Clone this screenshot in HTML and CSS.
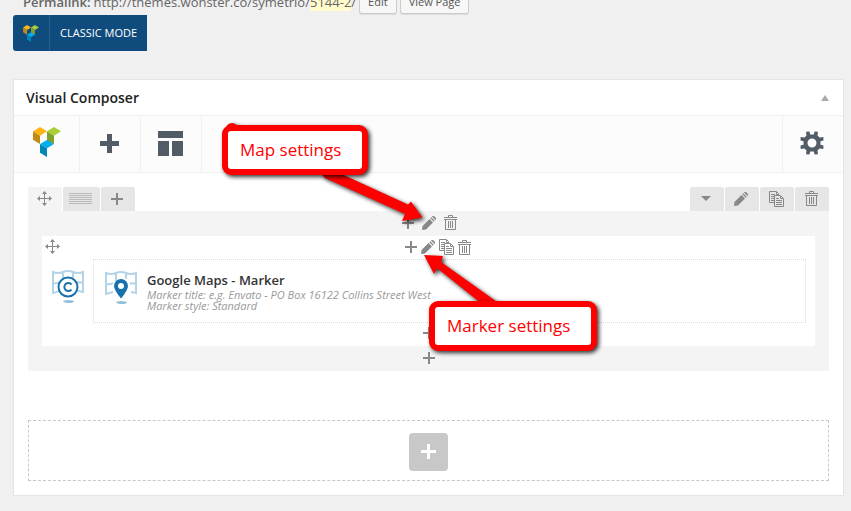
FILE: index.html
```html
<!DOCTYPE html>
<html lang="en">
<head>
<meta charset="utf-8">
<title>Visual Composer</title>
<link rel="stylesheet" href="styles.css">
</head>
<body>
<svg class="sprite" aria-hidden="true">
  <symbol id="logo" viewBox="0 0 84 90">
    <path fill="#fdb515" d="M0 13 21 0l21 13-21 13z"/><path fill="#c28a10" d="M0 13l21 13v25L0 38z"/>
    <path fill="#aacf38" d="M42 13 63 0l21 13-21 13z"/><path fill="#80a22c" d="M42 13l21 13v25L42 42z"/>
    <path fill="#00aeef" d="M21 51l21-12 21 12-21 13z"/><path fill="#0087b9" d="M21 51l21 13v26L21 77z"/>
  </symbol>
  <symbol id="plus" viewBox="0 0 12 12"><path d="M5 0h2v5h5v2H7v5H5V7H0V5h5z"/></symbol>
  <symbol id="plus-bold" viewBox="0 0 19 19"><path d="M7 0h5v7h7v5h-7v7H7v-7H0V7h7z"/></symbol>
  <symbol id="plus-add" viewBox="0 0 15 15"><path d="M6 0h3v6h6v3H9v6H6V9H0V6h6z"/></symbol>
  <symbol id="template" viewBox="0 0 25 25"><path d="M0 0h25v7H0zM0 10h11v15H0zM14 10h11v15H14z"/></symbol>
  <symbol id="move" viewBox="0 0 15 15"><path d="M7 2h1v5h5v1H8v5H7V8H2V7h5z"/><path d="M7.500 0 10 3H5zM7.500 15 5 12h5zM0 7.500 3 5v5zM15 7.500 12 10V5z"/></symbol>
  <symbol id="lines" viewBox="0 0 23 11"><path d="M0 0h23v1H0zM0 2h23v1H0zM0 4h23v1H0zM0 6h23v1H0zM0 8h23v1H0zM0 10h23v1H0z"/></symbol>
  <symbol id="caret" viewBox="0 0 10 5"><path d="M0 0h10L5 5z"/></symbol>
  <symbol id="pencil" viewBox="0 0 14 14"><path d="M0 14 .500 10 7.500 3l3.500 3.500-7 7zM8.300 2.200l1-1 3.500 3.500-1 1zM10 .500 10.500 0h1.500l2 2v1.500l-.500.500z"/></symbol>
  <symbol id="copy" viewBox="0 0 15 16"><path fill="none" stroke="currentColor" d="M5 11.500H.500V.500h7l2 2V5M7.500 1v2.500h2M2 3.500h4M2 5.500h3M2 7.500h3M2 9.500h3M5.500 4.500h6l3 3v8h-9zM11.500 5v2.500H14M7 7.500h3M7 9.500h6M7 11.500h6M7 13.500h6"/></symbol>
  <symbol id="trash" viewBox="0 0 13 15"><path fill="none" stroke="currentColor" d="M0 2.500h13M4.500 2V.500h4V2M0 4.500h13M1.500 5v9.500h10V5M4.500 6v7M6.500 6v7M8.500 6v7"/></symbol>
  <symbol id="gear" viewBox="-12 -12 24 24"><path fill-rule="evenodd" d="M-6-11.300-2.600-11.500-1.800-8.500H1.800L2.600-11.500 6-11.300 5.500-7.500 7.500-5.500 11.300-6 11.500-2.600 8.500-1.800V1.800L11.500 2.600 11.300 6 7.500 5.500 5.500 7.500 6 11.300 2.600 11.500 1.800 8.500H-1.800L-2.600 11.500-6 11.300-5.500 7.500-7.500 5.500-11.300 6-11.500 2.600-8.500 1.800V-1.800L-11.500-2.600-11.300-6-7.500-5.500-5.500-7.500zM0-4.500A4.500 4.500 0 1 0 0 4.500 4.500 4.500 0 1 0 0-4.500z"/></symbol>
  <symbol id="map" viewBox="0 0 32 33">
    <g fill="none" stroke="#b4d4e7" stroke-width="2"><path d="M8 21 1 23V2q5 2 10 0 5-2 10 0 5 2 10 0v20l-5-1M11 2v8M21 2v6M1 13q4 1 7-1M25 12q3 1 6 0"/></g>
    <path fill="#94c0da" d="M11 31q5-2 11 0 0 2-5 2t-6-2z"/>
  </symbol>
</svg>

<div class="permalink">
  <strong>Permalink:</strong>
  <span class="url">http://themes.wonster.co/symetrio/<mark>5144-2</mark>/</span>
  <button class="small" type="button">Edit</button>
  <button class="small" type="button">View Page</button>
</div>

<button class="classic" type="button">
  <span class="classic-icon"><svg width="16" height="17"><use href="#logo"/></svg></span>
  <span class="classic-label">CLASSIC MODE</span>
</button>

<main class="panel">
  <header class="panel-head">
    <h1>Visual Composer</h1>
    <button class="toggle" type="button" aria-label="Toggle panel"><svg width="8" height="6" viewBox="0 0 8 6"><path d="M4 0l4 6H0z"/></svg></button>
  </header>
  <nav class="toolbar">
    <a class="tool brand" href="#" aria-label="Visual Composer"><svg width="28" height="30"><use href="#logo"/></svg></a>
    <button class="tool" type="button" aria-label="Add element"><svg width="19" height="19"><use href="#plus-bold"/></svg></button>
    <button class="tool" type="button" aria-label="Templates"><svg width="25" height="25"><use href="#template"/></svg></button>
    <button class="tool settings" type="button" aria-label="Settings"><svg width="24" height="24"><use href="#gear"/></svg></button>
  </nav>

  <div class="content">
    <div class="tabs">
      <button class="tab move" type="button" aria-label="Move row"><svg width="15" height="15"><use href="#move"/></svg></button>
      <button class="tab layout" type="button" aria-label="Row layout"><svg width="23" height="11"><use href="#lines"/></svg></button>
      <button class="tab" type="button" aria-label="Add column"><svg width="12" height="12"><use href="#plus"/></svg></button>
      <span class="spacer"></span>
      <button class="tab" type="button" aria-label="Toggle row"><svg width="10" height="5"><use href="#caret"/></svg></button>
      <button class="tab" type="button" aria-label="Edit row"><svg width="14" height="14"><use href="#pencil"/></svg></button>
      <button class="tab" type="button" aria-label="Clone row"><svg width="15" height="16"><use href="#copy"/></svg></button>
      <button class="tab" type="button" aria-label="Delete row"><svg width="13" height="15"><use href="#trash"/></svg></button>
    </div>

    <section class="row">
      <div class="controls wide">
        <button type="button" aria-label="Add"><svg width="12" height="12"><use href="#plus"/></svg></button>
        <button type="button" aria-label="Edit map"><svg width="14" height="14"><use href="#pencil"/></svg></button>
        <button type="button" aria-label="Delete map"><svg width="13" height="15"><use href="#trash"/></svg></button>
      </div>
      <div class="column">
        <div class="column-head">
          <button class="drag" type="button" aria-label="Move map"><svg width="15" height="15"><use href="#move"/></svg></button>
          <div class="controls">
            <button type="button" aria-label="Add marker"><svg width="12" height="12"><use href="#plus"/></svg></button>
            <button type="button" aria-label="Edit marker"><svg width="14" height="14"><use href="#pencil"/></svg></button>
            <button type="button" aria-label="Clone marker"><svg width="15" height="16"><use href="#copy"/></svg></button>
            <button type="button" aria-label="Delete marker"><svg width="13" height="15"><use href="#trash"/></svg></button>
          </div>
        </div>
        <div class="map-body">
          <svg class="map-icon" width="32" height="33" viewBox="0 0 32 33"><use href="#map"/><circle cx="16" cy="17" r="9.500" fill="#fff" stroke="#1871ad" stroke-width="2"/><path fill="none" stroke="#1871ad" stroke-width="2" d="M19.500 14.500A4 4 0 1 0 19.500 19.500"/></svg>
          <article class="marker">
            <svg class="map-icon" width="32" height="33" viewBox="0 0 32 33"><use href="#map"/><path fill="#1871ad" fill-rule="evenodd" d="M16 27.500Q9 19 9 15a7 7 0 0 1 14 0q0 4-7 12.500zM16 12a3 3 0 1 0 0 6 3 3 0 1 0 0-6z"/></svg>
            <div>
              <h2>Google Maps - Marker</h2>
              <p>Marker title: e.g. Envato - PO Box 16122 Collins Street West</p>
              <p>Marker style: Standard</p>
            </div>
          </article>
        </div>
        <div class="controls foot"><button type="button" aria-label="Add marker below"><svg width="12" height="12"><use href="#plus"/></svg></button></div>
      </div>
      <div class="controls"><button type="button" aria-label="Add element below"><svg width="12" height="12"><use href="#plus"/></svg></button></div>
    </section>

    <div class="empty">
      <button class="add" type="button" aria-label="Add row"><svg width="15" height="15"><use href="#plus-add"/></svg></button>
    </div>
  </div>

  <div class="notes">
    <svg class="arrows" width="400" height="250" viewBox="214 116 400 250">
      <path d="M320 172L337 172 408 204.500 411 201.500 422.500 217.500 402 221 405 214 325 178z"/>
      <path d="M424 255L443 256 441 262 500 304 482 304 437 268 434 274z"/>
      <circle cx="232" cy="129" r="6"/>
    </svg>
    <div class="note map-note">Map settings</div>
    <div class="note marker-note">Marker settings</div>
  </div>
</main>
</body>
</html>
```
FILE: styles.css
```css
* { box-sizing: border-box; }
body {
  margin: 0;
  padding: 0 7px 0 13px;
  background: #f0f0f0;
  color: #666;
  font: 13px/24px "Open Sans", "Noto Sans", sans-serif;
  overflow: hidden;
}
svg { display: block; fill: currentColor; }
.sprite { position: absolute; width: 0; height: 0; }
button { font: inherit; border: 0; padding: 0; background: none; color: inherit; }
h1, h2, p { margin: 0; }

.permalink {
  display: flex;
  gap: 3px;
  margin-top: -10px;
  padding-left: 10px;
  white-space: nowrap;
}
.permalink strong { font-weight: 600; }
.permalink mark { background: #fffbcc; color: inherit; }
.small {
  height: 24px;
  padding: 0 8px;
  border: 1px solid #ccc;
  border-radius: 3px;
  background: #f7f7f7;
  box-shadow: 0 1px 0 #ddd;
  color: #555;
  font-size: 11px;
  line-height: 22px;
}

.classic {
  display: flex;
  align-items: center;
  height: 36px;
  margin-top: 1px;
  border-radius: 3px 0 0 3px;
  background: #104b7d;
  color: #fff;
  font-size: 11px;
}
.classic-icon {
  display: grid;
  place-items: center;
  width: 37px;
  height: 36px;
  border-right: 1px solid #28608f;
}
.classic-label { padding: 0 10px; }

.panel {
  position: relative;
  margin-top: 28px;
  border: 1px solid #e5e5e5;
  background: #fff;
  box-shadow: 0 1px 1px rgba(0, 0, 0, .04);
}
.panel-head {
  display: flex;
  align-items: center;
  justify-content: space-between;
  height: 36px;
  padding: 0 14px 0 12px;
  border-bottom: 1px solid #eee;
}
.panel-head h1 { color: #222; font-size: 14px; font-weight: 600; }
.toggle { color: #aaa; }

.toolbar {
  display: flex;
  height: 57px;
  border-bottom: 1px solid #f0f0f0;
  background: #fcfcfc;
  color: #515c66;
}
.tool {
  display: grid;
  place-items: center;
  width: 61px;
  padding: 0 2px 2px 0;
  border-right: 1px solid #f0f0f0;
}
.brand { width: 66px; padding: 0 0 4px; }
.settings { margin-left: auto; border: 0; border-left: 1px solid #f0f0f0; }

.content { padding: 14px; }
.tabs { display: flex; gap: 1px; color: #888; }
.tab {
  display: grid;
  place-items: center;
  width: 34px;
  height: 24px;
  padding: 0 2px 1px 0;
  border-radius: 2px 2px 0 0;
  background: #e6e6e6;
}
.tab.move { background: #f4f4f4; }
.tab.layout { width: 37px; color: #bbb; }
.spacer { flex: 1; }

.row { padding: 0 14px; background: #f4f4f4; color: #888; }
.controls {
  display: flex;
  align-items: center;
  justify-content: center;
  gap: 4px;
  height: 25px;
  padding-bottom: 2px;
}
.controls.wide { gap: 8px; padding-left: 1px; }
.column { background: #fff; }
.column-head { display: grid; grid-template-columns: 1fr auto 1fr; height: 23px; }
.column-head .controls { height: 23px; padding: 0 0 1px 18px; }
.drag { justify-self: start; padding: 0 3px 2px; }
.map-body { display: flex; gap: 9px; padding: 0 9px 0 10px; }
.map-icon { flex: none; margin-top: 11px; }
.marker {
  display: flex;
  flex: 1;
  gap: 10px;
  height: 64px;
  padding: 0 11px;
  border: 1px dotted #ddd;
}
.marker h2 { margin-top: 11px; color: #333; font-size: 13px; font-weight: 600; line-height: 18px; }
.marker p { color: #999; font-size: 11px; font-style: italic; line-height: 11px; }
.controls.foot { height: 23px; padding-bottom: 4px; }

.empty {
  display: grid;
  place-items: center;
  height: 61px;
  margin-top: 49px;
  padding-top: 2px;
  border: 1px dashed #c8c8c8;
}
.add {
  display: grid;
  place-items: center;
  width: 39px;
  height: 38px;
  border-radius: 4px;
  background: #c8c8c8;
  color: #fff;
}

.notes { position: absolute; left: 200px; top: 36px; }
.arrows { color: #f00; filter: drop-shadow(2px 2px 2px rgba(0, 0, 0, .8)); }
.note {
  position: absolute;
  height: 50px;
  padding: 0 12px;
  border: 6px solid #f00;
  border-radius: 9px;
  background: #fff;
  box-shadow: 2px 2px 4px rgba(0, 0, 0, .8);
  color: #f00;
  font-size: 17px;
  line-height: 38px;
  white-space: nowrap;
}
.map-note { left: 8px; top: 9px; width: 146px; }
.marker-note { left: 215px; top: 185px; width: 168px; }
```
